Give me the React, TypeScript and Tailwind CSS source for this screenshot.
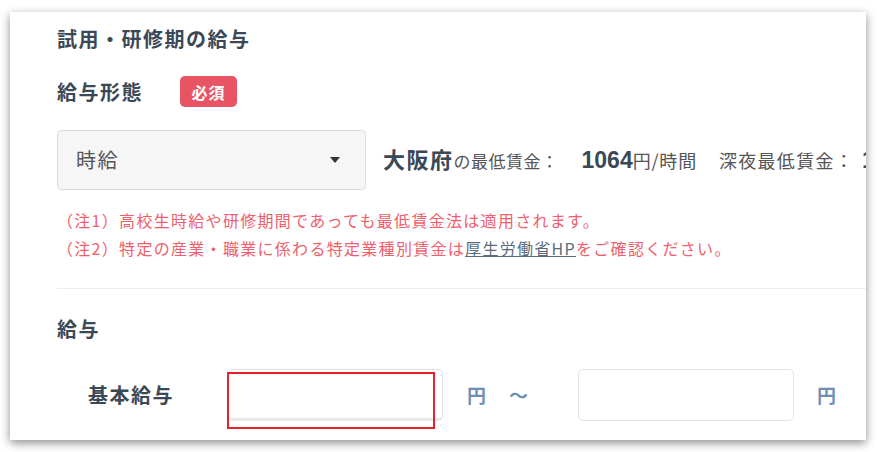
import React from "react";

const jp = { fontFamily: '"Noto Sans CJK JP", "Noto Sans", sans-serif' };
const num = { fontFamily: '"Liberation Sans", "Noto Sans CJK JP", sans-serif' };

export default function App() {
  return (
    <div className="w-[877px] h-[452px] bg-white overflow-hidden" style={jp}>
      <div className="relative ml-[10px] mt-[12px] w-[856px] h-[428px] bg-white overflow-hidden shadow-[0_3px_9px_rgba(0,0,0,0.45)]">
        <div className="flex flex-col pl-[47px] pt-[13px]">
          <div className="text-[20px] leading-[28px] font-bold tracking-[1.5px] text-[#3b4856]">
            試用・研修期の給与
          </div>

          <div className="mt-[23px] flex items-center h-[31px]">
            <div className="text-[20px] leading-[28px] font-bold tracking-[1.5px] text-[#3b4856] w-[123px]">
              給与形態
            </div>
            <div className="h-[31px] w-[57px] rounded-[5px] bg-[#e95464] text-white text-[16px] font-bold flex items-center justify-center tracking-[1px]">
              必須
            </div>
          </div>

          <div className="mt-[23px] flex items-center">
            <div className="w-[309px] h-[60px] rounded-[4px] border border-[#dcdcdc] bg-[#f6f6f6] flex items-center justify-between pl-[18px] pr-[25px] shrink-0">
              <span className="text-[20px] tracking-[1.5px] text-[#555]">時給</span>
              <svg width="10" height="6" viewBox="0 0 10 6">
                <path d="M0 0 L10 0 L5 6 Z" fill="#333" />
              </svg>
            </div>
            <div className="ml-[17px] flex items-baseline whitespace-nowrap text-[#3b4856]">
              <span className="text-[22px] font-bold tracking-[1.5px]">大阪府</span>
              <span className="text-[17px] tracking-[0.5px] text-[#555]">の最低賃金：</span>
              <span className="text-[23px] font-bold ml-[23px]" style={num}>1064</span>
              <span className="text-[18px] tracking-[0.8px] text-[#555]">円/時間</span>
              <span className="text-[18px] tracking-[1.3px] text-[#555] ml-[22px]">深夜最低賃金：</span>
              <span className="text-[23px] font-bold ml-[8px]" style={num}>1</span>
            </div>
          </div>

          <div className="mt-[16px] text-[16px] leading-[28px] tracking-[1.3px] text-[#f0606c] whitespace-nowrap">
            <div>（注1）高校生時給や研修期間であっても最低賃金法は適用されます。</div>
            <div>
              （注2）特定の産業・職業に係わる特定業種別賃金は
              <span className="text-[#5b6b7c] underline">厚生労働省HP</span>
              をご確認ください。
            </div>
          </div>

          <div className="mt-[26px] h-px bg-[#eceff1]" />

          <div className="mt-[26px] text-[20px] leading-[28px] font-bold tracking-[1.5px] text-[#3b4856]">
            給与
          </div>

          <div className="mt-[26px] flex items-center h-[52px]">
            <div className="ml-[31px] w-[140px] text-[20px] font-bold tracking-[1.5px] text-[#3b4856]">
              基本給与
            </div>
            <div className="w-[215px] h-[52px] rounded-[5px] border border-[#e3e3e3] border-b-[3px] border-b-[#e8e8e8] bg-white shrink-0" />
            <span className="ml-[24px] text-[19px] font-bold text-[#6f8fb3]">円</span>
            <span className="ml-[23px] text-[19px] font-bold text-[#6f8fb3]">～</span>
            <div className="ml-[50px] w-[216px] h-[52px] rounded-[5px] border border-[#e3e3e3] bg-white shrink-0" />
            <span className="ml-[23px] text-[19px] font-bold text-[#6f8fb3]">円</span>
          </div>
        </div>

        <div className="absolute left-[217px] top-[360px] w-[208px] h-[57px] border-2 border-[#e8202a]" />
      </div>
    </div>
  );
}
